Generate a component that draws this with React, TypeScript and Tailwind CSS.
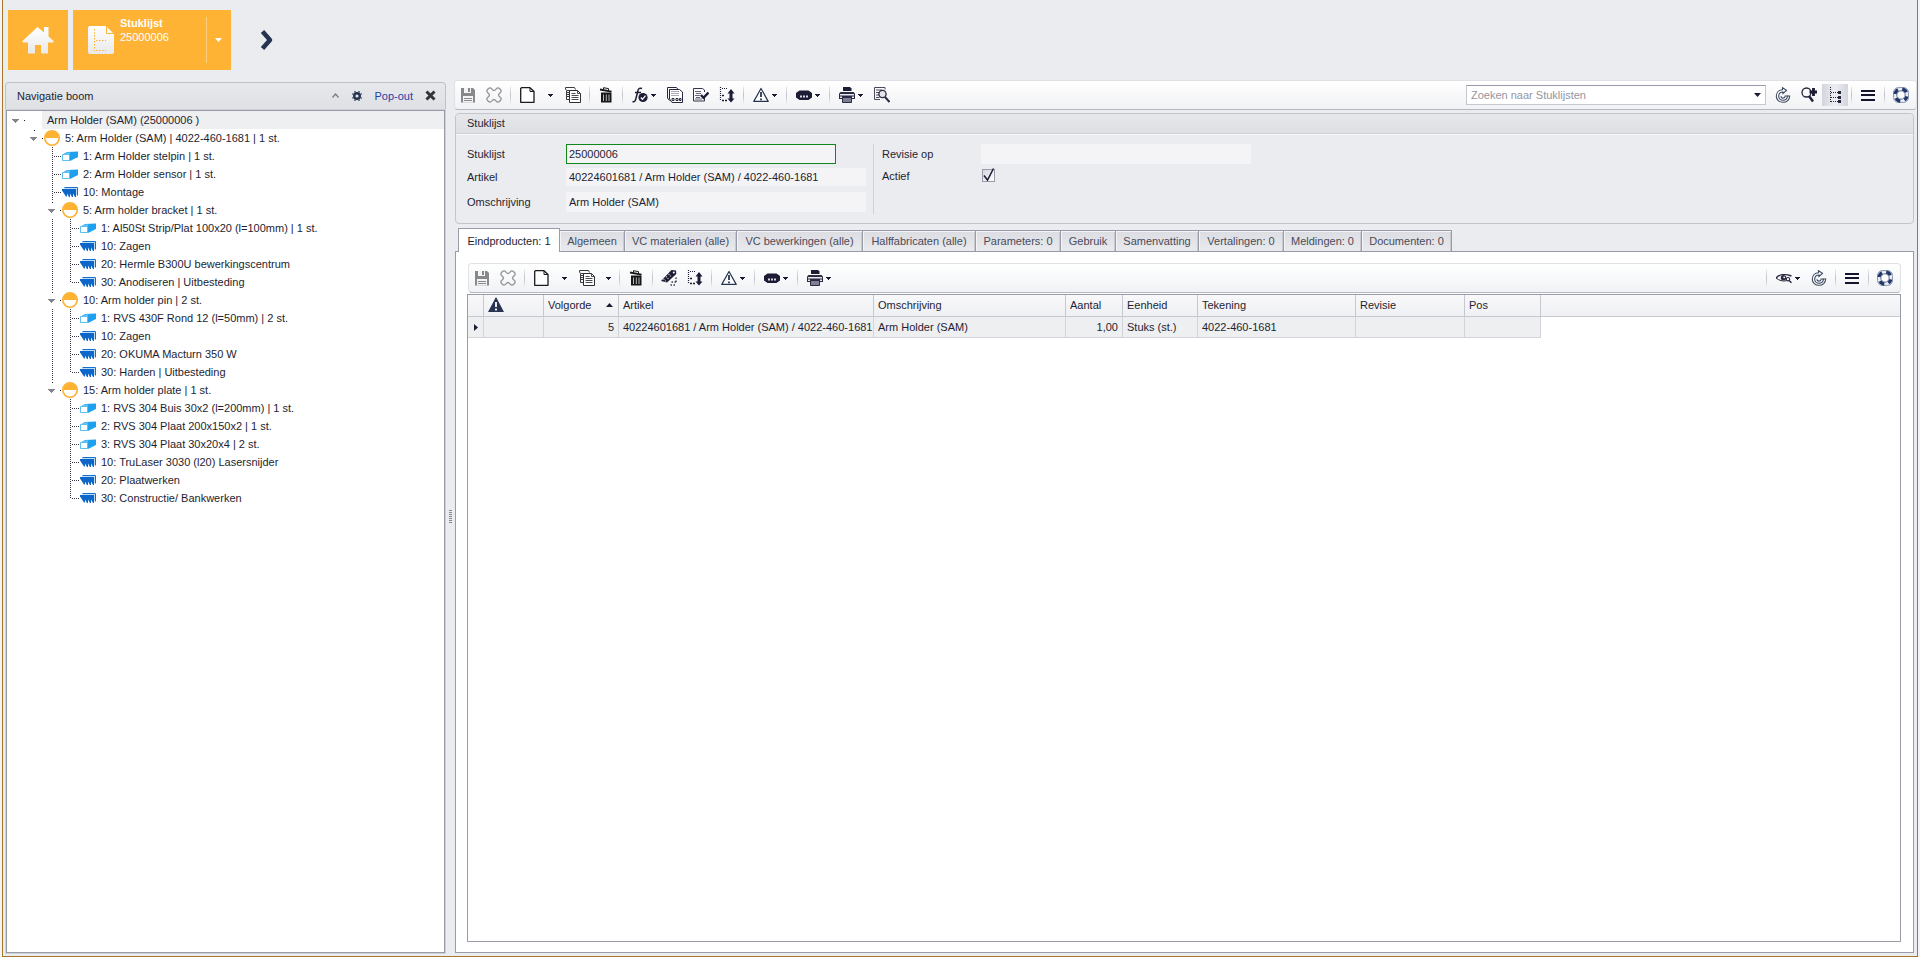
import type { ReactNode } from "react";

type Guide = "blank" | "line" | "tee" | "end" | "root" | "open";

type TreeRow = {
  guides: Guide[];
  icon: "none" | "assembly" | "material" | "operation";
  label: string;
  selected?: boolean;
};

const treeRows: TreeRow[] = [
  { guides: ["root"], icon: "none", label: "Arm Holder (SAM) (25000006 )", selected: true },
  { guides: ["blank", "open"], icon: "assembly", label: "5: Arm Holder (SAM) | 4022-460-1681 | 1 st." },
  { guides: ["blank", "blank", "tee"], icon: "material", label: "1: Arm Holder stelpin | 1 st." },
  { guides: ["blank", "blank", "tee"], icon: "material", label: "2: Arm Holder sensor | 1 st." },
  { guides: ["blank", "blank", "tee"], icon: "operation", label: "10: Montage" },
  { guides: ["blank", "blank", "open"], icon: "assembly", label: "5: Arm holder bracket | 1 st." },
  { guides: ["blank", "blank", "line", "tee"], icon: "material", label: "1: Al50St Strip/Plat 100x20 (l=100mm) | 1 st." },
  { guides: ["blank", "blank", "line", "tee"], icon: "operation", label: "10: Zagen" },
  { guides: ["blank", "blank", "line", "tee"], icon: "operation", label: "20: Hermle B300U bewerkingscentrum" },
  { guides: ["blank", "blank", "line", "end"], icon: "operation", label: "30: Anodiseren | Uitbesteding" },
  { guides: ["blank", "blank", "open"], icon: "assembly", label: "10: Arm holder pin | 2 st." },
  { guides: ["blank", "blank", "line", "tee"], icon: "material", label: "1: RVS 430F Rond 12 (l=50mm) | 2 st." },
  { guides: ["blank", "blank", "line", "tee"], icon: "operation", label: "10: Zagen" },
  { guides: ["blank", "blank", "line", "tee"], icon: "operation", label: "20: OKUMA Macturn 350 W" },
  { guides: ["blank", "blank", "line", "end"], icon: "operation", label: "30: Harden | Uitbesteding" },
  { guides: ["blank", "blank", "open"], icon: "assembly", label: "15: Arm holder plate | 1 st." },
  { guides: ["blank", "blank", "blank", "tee"], icon: "material", label: "1: RVS 304 Buis 30x2 (l=200mm) | 1 st." },
  { guides: ["blank", "blank", "blank", "tee"], icon: "material", label: "2: RVS 304 Plaat 200x150x2 | 1 st." },
  { guides: ["blank", "blank", "blank", "tee"], icon: "material", label: "3: RVS 304 Plaat 30x20x4 | 2 st." },
  { guides: ["blank", "blank", "blank", "tee"], icon: "operation", label: "10: TruLaser 3030 (l20) Lasersnijder" },
  { guides: ["blank", "blank", "blank", "tee"], icon: "operation", label: "20: Plaatwerken" },
  { guides: ["blank", "blank", "blank", "end"], icon: "operation", label: "30: Constructie/ Bankwerken" },
];

const tabs = [
  { label: "Algemeen", width: "w-[65px]" },
  { label: "VC materialen (alle)", width: "w-[112px]" },
  { label: "VC bewerkingen (alle)", width: "w-[126px]" },
  { label: "Halffabricaten (alle)", width: "w-[113px]" },
  { label: "Parameters: 0", width: "w-[85px]" },
  { label: "Gebruik", width: "w-[55px]" },
  { label: "Samenvatting", width: "w-[83px]" },
  { label: "Vertalingen: 0", width: "w-[85px]" },
  { label: "Meldingen: 0", width: "w-[78px]" },
  { label: "Documenten: 0", width: "w-[90px]" },
];

/* ---------- tree parts ---------- */

function GuideCell({ kind }: { kind: Guide }) {
  return (
    <svg width="18" height="18" viewBox="0 0 18 18" className="shrink-0" shapeRendering="crispEdges">
      {(kind === "line" || kind === "tee") && (
        <path d="M9.500 0V18" stroke="#3a3a4a" strokeDasharray="1 1" />
      )}
      {kind === "end" && <path d="M9.500 0V10" stroke="#3a3a4a" strokeDasharray="1 1" />}
      {(kind === "tee" || kind === "end") && (
        <path d="M11 9.500H18" stroke="#3a3a4a" strokeDasharray="1 1" />
      )}
      {(kind === "root" || kind === "open") && (
        <>
          <path d="M5 8h7v1h-1v1h-1v1H9v1H8v-1H7v-1H6V9H5z" fill="#84848f" />
          <rect x="17" y="9" width="1" height="1" fill="#1c1c30" />
        </>
      )}
      {kind === "open" && <rect x="9" y="1" width="1" height="1" fill="#1c1c30" />}
    </svg>
  );
}

function NodeIcon({ icon }: { icon: TreeRow["icon"] }) {
  if (icon === "none") return <span className="w-4 shrink-0" />;
  return (
    <svg width="16" height="16" viewBox="0 0 16 16" className="shrink-0">
      {icon === "assembly" && (
        <>
          <circle cx="8" cy="8" r="7.200" fill="#fff" stroke="#fdb232" strokeWidth="1.600" />
          <path d="M1 8a7 7 0 0 1 14 0z" fill="#fdb232" />
        </>
      )}
      {icon === "material" && (
        <>
          <path d="M0 7 5 4l11-.5v5.500L8 13z" fill="#1fa0ee" />
          <path d="M2 6.300 5.500 4.500 8.500 4.300 7 6.300z" fill="#6cc5f7" />
          <path d="M.5 6.500h7v6h-7z" fill="#fff" stroke="#5cbff4" />
        </>
      )}
      {icon === "operation" && (
        <>
          <path d="M2.500 3.500h13v8" fill="none" stroke="#1470cf" />
          <path d="M2 4.500h12.500V11" fill="none" stroke="#b9dcf8" />
          <path d="M0 5h14v8h-1l-2-3.500v3.500h-1l-2-3.500v3.500H7L5 9.500v3H4L0 6.500z" fill="#0d66c8" />
        </>
      )}
    </svg>
  );
}

/* ---------- toolbar parts ---------- */

function Icon({ children }: { children: ReactNode }) {
  return (
    <svg width="16" height="16" viewBox="0 0 16 16" fill="none" className="shrink-0">
      {children}
    </svg>
  );
}

function Caret() {
  return (
    <svg width="5" height="3" viewBox="0 0 5 3" className="shrink-0" shapeRendering="crispEdges">
      <path d="M0 0h5v1H4v1H3v1H2V2H1V1H0z" fill="#1c1c30" />
    </svg>
  );
}

function ToolButton({ label, active, children }: { label: string; active?: boolean; children: ReactNode }) {
  return (
    <button
      type="button"
      aria-label={label}
      className={
        active
          ? "flex h-[22px] w-[26px] items-center justify-center bg-linear-to-r from-[#d3d5dc] via-[#eceef2] to-[#d3d5dc]"
          : "flex h-[22px] w-[26px] items-center justify-center"
      }
    >
      {children}
    </button>
  );
}

function DropButton({ label, children }: { label: string; children: ReactNode }) {
  return (
    <button type="button" aria-label={label} className="flex h-[22px] w-9 items-center gap-[3px] pl-[6px]">
      {children}
      <Caret />
    </button>
  );
}

function CaretButton({ label, wide }: { label: string; wide?: boolean }) {
  return (
    <button
      type="button"
      aria-label={label}
      className={wide ? "flex h-[22px] w-5 items-center justify-center" : "flex h-[22px] w-4 items-center justify-center"}
    >
      <Caret />
    </button>
  );
}

function Separator() {
  return (
    <span className="flex w-[7px] shrink-0 justify-center">
      <span className="h-[18px] w-px bg-linear-to-b from-[#eeeff2] via-[#c0c2ca] to-[#eeeff2]" />
    </span>
  );
}

const SaveIcon = () => (
  <Icon>
    <path d="M1 1h12l2 2v12.500H1z" fill="#88888c" />
    <path d="M4 1h7v5H4zM3 9h10v6.500H3z" fill="#f4f4f6" />
    <path d="M8 1h2v4H8zM4 11h8v1H4zM4 13h8v1H4z" fill="#88888c" />
  </Icon>
);

const CancelIcon = () => (
  <Icon>
    <path
      d="M4.200 .8C5.500.8 6.500 3.500 8 3.500S10.500.8 11.800.8s3.400 2 3.400 3.400S12.500 6.500 12.500 8s2.700 2.500 2.700 3.800-2 3.400-3.400 3.400S9.500 12.500 8 12.500s-2.500 2.700-3.800 2.700S.8 13.200.8 11.800 3.500 9.500 3.500 8 .8 5.500.8 4.200 2.800.8 4.200.8z"
      stroke="#949498"
      strokeWidth="1.300"
      strokeLinejoin="round"
    />
  </Icon>
);

const NewIcon = () => (
  <Icon>
    <path d="M2.500 .7h8.500l4 3.800v10.800h-13.300V1.500z" fill="#fff" stroke="#1a1a1e" strokeWidth="1.300" strokeLinejoin="round" />
    <path d="M11 1v3.500h4" stroke="#1a1a1e" />
  </Icon>
);

const CopyIcon = () => (
  <Icon>
    <path d="M4 12.500H1.500v-9L.5 2V.5h9l1 2" stroke="#3c3c40" />
    <path d="M2 3.500h3M2 5.500h2M2 7.500h2M2 9.500h2" stroke="#3c3c40" />
    <path d="M4.500 3.500h8l3 3v9h-11z" fill="#fff" stroke="#2c2c30" strokeLinejoin="round" />
    <path d="M12.500 3.500v3h3M6.500 6.500h4M6.500 8.500h7M6.500 10.500h7M6.500 12.500h7" stroke="#4a4a50" />
  </Icon>
);

const TrashIcon = () => (
  <Icon>
    <path d="M3 5.500h10.500v10H3z" fill="#17171a" />
    <path d="M5.500 7.500v6.500M8.300 7.500v6.500M11 7.500v6.500" stroke="#b5b5ba" />
    <path d="M2 2.500 13.500 4.600" stroke="#17171a" strokeWidth="1.800" />
    <path d="M5.500 2.500V.7l5 .9v1.800" stroke="#17171a" />
  </Icon>
);

const FormulaIcon = () => (
  <Icon>
    <path d="M.5 14.500c2 .8 2.800-.6 3.300-2.500L6 3.500C6.500 1.500 8 .6 10 1.500M3 5.500h6" stroke="#1c1c34" strokeWidth="1.500" />
    <circle cx="11" cy="10.500" r="4.600" fill="#1c1c34" />
    <path d="m8.800 10.500 1.700 1.800 3-3.600" stroke="#fff" strokeWidth="1.300" />
  </Icon>
);

const CalcPagesIcon = () => (
  <Icon>
    <path d="M2.500 13.500 .5 11V.5h9l1.500 2" stroke="#26263c" />
    <path d="M2.500 12V2.500h10l3 2.500v10.500H5z" fill="#fff" stroke="#26263c" />
    <path d="M4.500 4.500h8M4.500 6.500h8M4.500 8.500h8" stroke="#55556a" strokeDasharray="1 1" />
    <path d="M5 11.500h2v2H5zM9 11.500h2v2H9zM12.500 11.500h1.500v2h-1.500z" stroke="#26263c" />
  </Icon>
);

const CheckListIcon = () => (
  <Icon>
    <path d="M11.500 5V3l-2-1.500h-9v12.500h11V11" stroke="#35354a" />
    <path d="M2 4.500h6M3 6.500h5M2 8.500h5M3 10.500h4M2 12h7" stroke="#6a6a7c" />
    <path d="m8 8 2.500 2.800L15.500 5.500" stroke="#1c1c34" strokeWidth="2.400" />
  </Icon>
);

const ResizeIcon = () => (
  <Icon>
    <path d="M1.500 0v14" stroke="#1c1c34" strokeWidth="1.200" strokeDasharray="1 1" />
    <path d="M3 1.500h6" stroke="#1c1c34" strokeWidth="1.200" strokeDasharray="1 1" />
    <path d="M3 8.500h3M3 13.500h6" stroke="#1c1c34" strokeWidth="1.600" strokeDasharray="2 1" />
    <path d="M12 2 15.500 6.500h-2v5h2L12 15.500 8.500 11.500h2v-5h-2z" fill="#1c1c34" />
  </Icon>
);

const WarnIcon = () => (
  <Icon>
    <path d="M8 1.500 15.200 14.400H.8z" fill="#fff" stroke="#27344f" strokeWidth="1.200" strokeLinejoin="round" />
    <path d="M8 5v5M8 11.500v1.700" stroke="#27344f" strokeWidth="1.800" />
  </Icon>
);

const MoreIcon = () => (
  <Icon>
    <path d="M3.500 3.500h9L16 6v4.500l-3.500 2.500h-9L0 10.500V6z" fill="#1c1c34" />
    <path d="M4 8.500h2v2H4zM7 8.500h2v2H7zM10 8.500h2v2h-2z" fill="#d8d8e2" />
  </Icon>
);

const PrintIcon = () => (
  <Icon>
    <path d="M4 0h7l1.500 1.500V4H4z" fill="#1c1c34" />
    <path d="M1.500 5h13L16 6.500V12H0V6.500z" fill="#2a2a42" />
    <path d="M1 7h14v1.500H1zM1 9.500h2V11H1zM13 9.500h2V11h-2z" fill="#e6e8ee" />
    <path d="M3.500 10.500h9v5h-9z" fill="#7c8092" stroke="#2a2a42" />
  </Icon>
);

const PreviewIcon = () => (
  <Icon>
    <path d="M11 2.500V.5H.5v12H6" stroke="#4a4a5c" />
    <path d="M2 3h6M2 5.500h3.500M2 8h3M2 10.500h3.500" stroke="#4a4a5c" />
    <circle cx="8.500" cy="7" r="3.600" fill="#e4e6ec" stroke="#2a2a40" strokeWidth="1.300" />
    <path d="M11 10 15.500 15" stroke="#2a2a40" strokeWidth="2" />
  </Icon>
);

const RefreshIcon = () => (
  <Icon>
    <path
      d="M7.500.7 11.500 3.400 8 6.500V5C5.300 5 3.700 6.900 3.700 9.200c0 2.400 1.900 4.100 4.300 4.100s4.300-1.700 4.500-4.300h2.200c-.1 3.700-3 6.300-6.700 6.300S1.300 12.700 1.300 9.200c0-3.700 2.700-6.300 6.200-6.500z"
      fill="#fff"
      stroke="#3a465e"
      strokeWidth="1.100"
    />
    <path d="M6 9.200c0 1.200.9 1.900 2 1.900s2-.8 2.200-2.100h2.300" stroke="#3a465e" strokeWidth="1.100" />
  </Icon>
);

const ZoomPlusIcon = () => (
  <Icon>
    <circle cx="5.500" cy="5.500" r="4.500" stroke="#24243a" strokeWidth="1.300" />
    <path d="M8 9 12 14.500" stroke="#24243a" strokeWidth="2.500" />
    <path d="M12.500 1v8M8.500 5H16" stroke="#1c1c34" strokeWidth="2.800" />
  </Icon>
);

const TreeIcon = () => (
  <Icon>
    <path d="M3.500 0v16" stroke="#24243a" strokeDasharray="1 1" />
    <path d="M4 5.500h7M4 10.500h7M4 14.500h7" stroke="#24243a" strokeDasharray="1 1" />
    <path d="M11 4h3v3h-3zM11 9h3v3h-3zM11 13h3v3h-3z" fill="#24243a" />
  </Icon>
);

const MenuIcon = () => (
  <Icon>
    <path d="M1 3h14v2H1zM1 7h14v2H1zM1 12h14v2H1z" fill="#14142a" />
  </Icon>
);

const HelpIcon = () => (
  <Icon>
    <rect x=".6" y=".6" width="14.800" height="14.800" rx="4.800" fill="#eef0f5" stroke="#7a86a2" strokeWidth="0.900" />
    <circle
      cx="8"
      cy="8"
      r="6"
      stroke="#22376c"
      strokeWidth="3.400"
      strokeDasharray="5.400 4.025"
      strokeDashoffset="2.700"
      transform="rotate(30 8 8)"
    />
    <circle cx="8" cy="8" r="4.200" fill="#fff" stroke="#4a5a84" strokeWidth="0.900" />
  </Icon>
);

const TagIcon = () => (
  <Icon>
    <path d="M10.500 0 15 .5l.3 3.500L6 12.500 0 11z" fill="#1c1c34" />
    <path d="M2.500 9 5 11.500M5 6.500 8 9.500M7.500 4 10.500 7" stroke="#c9c9d4" strokeWidth="1.200" strokeDasharray="1.200 1" />
    <circle cx="12.800" cy="2.500" r="1" fill="#fff" />
    <path d="M9.500 15h6M10.500 12h5M15 7.500v6" stroke="#3a3a50" strokeWidth="1.500" strokeDasharray="1.500 1.500" />
  </Icon>
);

const EyeIcon = () => (
  <Icon>
    <path d="M0 8C3 4.500 9 3.500 15.500 6" stroke="#2a2a42" strokeWidth="1.400" />
    <path d="M0 8c3 2.500 7 3.500 10 2.800" stroke="#2a2a42" />
    <circle cx="7.500" cy="7.800" r="2.700" fill="#2a2a42" />
    <circle cx="8.200" cy="7.300" r="0.900" fill="#fff" />
    <circle cx="12" cy="9.200" r="1.700" fill="#fff" stroke="#2a2a42" strokeWidth="1.200" />
    <path d="m13.300 10.700 2.200 2" stroke="#2a2a42" strokeWidth="1.500" />
  </Icon>
);

/* ---------- page sections ---------- */

function TopTiles() {
  return (
    <header className="flex h-20 shrink-0 items-start pt-[10px] pl-[5px]">
      <button type="button" aria-label="Home" className="flex size-[60px] items-center justify-center bg-[#feb335]">
        <svg width="32" height="28" viewBox="0 0 32 28">
          <defs>
            <linearGradient id="paper" x1="0" y1="0" x2="0" y2="1">
              <stop offset="0" stopColor="#ffffff" />
              <stop offset="1" stopColor="#e9e9ea" />
            </linearGradient>
          </defs>
          <path
            d="M15.500 1 22 6.500V1h4.500v9.500L31.500 15v1.500H26v11h-7V19h-6v8.500H6v-11H.5V15z"
            fill="url(#paper)"
          />
        </svg>
      </button>
      <div className="ml-[5px] flex h-[60px] w-[158px] bg-[#feb335] text-white">
        <svg width="26" height="28" viewBox="0 0 26 28" className="mt-4 ml-[15px] shrink-0">
          <path d="M2 0h16l8 8v18a2 2 0 0 1-2 2H2a2 2 0 0 1-2-2V2a2 2 0 0 1 2-2z" fill="url(#paper)" />
          <path d="M18.500 0v7.500H26" stroke="#feb335" fill="none" />
          <path d="M6.500 3v22M8 14.500h10M8 24.500h10" stroke="#feb335" strokeDasharray="1.500 1.500" fill="none" />
        </svg>
        <div className="ml-[6px] flex-1 pt-[7px]">
          <div className="text-[11px] leading-[13px] font-bold">Stuklijst</div>
          <div className="text-[11px] leading-[14px]">25000006</div>
        </div>
        <button
          type="button"
          aria-label="Stuklijst menu"
          className="my-[7px] flex w-[25px] items-center justify-center border-l border-[#ffcf80] pr-[2px]"
        >
          <svg width="7" height="4" viewBox="0 0 7 4">
            <path d="M0 0h7L3.500 4z" fill="#fff" />
          </svg>
        </button>
      </div>
      <button type="button" aria-label="Volgende" className="mt-[19px] ml-[29px]">
        <svg width="14" height="22" viewBox="0 0 14 22">
          <path d="m2.500 2.500 7.500 8.500-7.500 8.500" fill="none" stroke="#26324f" strokeWidth="4.500" strokeLinejoin="round" />
        </svg>
      </button>
    </header>
  );
}

function NavigationPanel() {
  return (
    <aside className="mt-[2px] flex w-[441px] shrink-0 flex-col">
      <div className="flex h-7 shrink-0 items-center rounded-t border border-b-0 border-[#bfc1c8] bg-linear-to-b from-[#e7e8eb] to-[#dfe0e4] pr-[9px] pb-[2px] pl-[11px]">
        <h2 className="flex-1">Navigatie boom</h2>
        <button type="button" aria-label="Inklappen">
          <svg width="7" height="5" viewBox="0 0 7 5">
            <path d="m.5 4.500 3-3.500 3 3.500" fill="none" stroke="#7a7a86" strokeWidth="1.300" />
          </svg>
        </button>
        <button type="button" aria-label="Instellingen" className="ml-[13px]">
          <svg width="10" height="10" viewBox="0 0 10 10">
            <circle cx="5" cy="5" r="2.800" fill="none" stroke="#27344f" strokeWidth="2.400" />
            <path d="M3 0v10M7 0v10M0 3h10M0 7h10" stroke="#27344f" strokeWidth="1.200" strokeDasharray="1.500 7" />
          </svg>
        </button>
        <button type="button" className="ml-3 text-[#1f3fa8]">
          Pop-out
        </button>
        <button type="button" aria-label="Sluiten" className="ml-3">
          <svg width="11" height="11" viewBox="0 0 11 11">
            <path d="m1.500 1.500 8 8m0-8-8 8" stroke="#333338" strokeWidth="3" />
          </svg>
        </button>
      </div>
      <ul className="mx-px flex-1 border border-[#9a9ba8] bg-white shadow-[0_0_0_1px_#cfd1d8]">
        {treeRows.map((row, index) => (
          <li key={index} className="flex h-[18px] items-center">
            {row.guides.map((kind, column) => (
              <GuideCell key={column} kind={kind} />
            ))}
            <span className="w-px shrink-0" />
            <NodeIcon icon={row.icon} />
            <span
              className={
                row.selected
                  ? "h-full flex-1 bg-[#eeeff1] pl-[5px] leading-[18px] whitespace-nowrap"
                  : "h-full flex-1 pl-[5px] leading-[18px] whitespace-nowrap"
              }
            >
              {row.label}
            </span>
          </li>
        ))}
      </ul>
    </aside>
  );
}

function MainToolbar() {
  return (
    <div className="flex h-[30px] shrink-0 items-center rounded border border-[#dfe1e5] border-b-[#b4b7c0] bg-linear-to-b from-white to-[#f1f2f5] pr-[2px]">
      <ToolButton label="Opslaan"><SaveIcon /></ToolButton>
      <ToolButton label="Annuleren"><CancelIcon /></ToolButton>
      <Separator />
      <ToolButton label="Nieuw"><NewIcon /></ToolButton>
      <CaretButton label="Nieuw opties" wide />
      <ToolButton label="Kopiëren"><CopyIcon /></ToolButton>
      <Separator />
      <ToolButton label="Verwijderen"><TrashIcon /></ToolButton>
      <Separator />
      <DropButton label="Formules"><FormulaIcon /></DropButton>
      <ToolButton label="Calculatie"><CalcPagesIcon /></ToolButton>
      <ToolButton label="Controleren"><CheckListIcon /></ToolButton>
      <ToolButton label="Hernummeren"><ResizeIcon /></ToolButton>
      <Separator />
      <DropButton label="Meldingen"><WarnIcon /></DropButton>
      <Separator />
      <DropButton label="Meer"><MoreIcon /></DropButton>
      <Separator />
      <DropButton label="Afdrukken"><PrintIcon /></DropButton>
      <ToolButton label="Voorbeeld"><PreviewIcon /></ToolButton>
      <div className="mr-1 ml-auto flex h-5 w-[300px] items-center border border-[#c6c7d0] border-t-[#9a9ba8] bg-white pr-1">
        <input
          type="text"
          aria-label="Zoeken"
          placeholder="Zoeken naar Stuklijsten"
          className="h-full min-w-0 flex-1 pl-1 outline-none placeholder:text-[#9495a0]"
        />
        <button type="button" aria-label="Zoekopties">
          <svg width="7" height="4" viewBox="0 0 7 4">
            <path d="M0 0h7L3.500 4z" fill="#1c1c30" />
          </svg>
        </button>
      </div>
      <ToolButton label="Vernieuwen"><RefreshIcon /></ToolButton>
      <ToolButton label="Uitgebreid zoeken"><ZoomPlusIcon /></ToolButton>
      <ToolButton label="Navigatie boom" active><TreeIcon /></ToolButton>
      <Separator />
      <ToolButton label="Menu"><MenuIcon /></ToolButton>
      <Separator />
      <ToolButton label="Help"><HelpIcon /></ToolButton>
    </div>
  );
}

function DetailsGroup() {
  return (
    <section className="mt-[3px] mr-[3px] ml-px h-[111px] shrink-0 rounded border border-[#c3c5cc]">
      <h2 className="h-5 rounded-t border-b border-[#cfd1d6] bg-linear-to-b from-[#e6e7ea] to-[#dfe0e4] pl-[11px] leading-[18px]">
        Stuklijst
      </h2>
      <div className="flex border-t border-[#f8f8fa] pt-[9px] pl-[11px]">
        <div className="grid w-[406px] grid-cols-[99px_1fr] content-start items-center gap-y-1">
          <label htmlFor="stuklijst">Stuklijst</label>
          <input id="stuklijst" defaultValue="25000006" className="h-5 w-[270px] border border-[#11861a] bg-[#f4f4f6] px-[2px] outline-none" />
          <label htmlFor="artikel">Artikel</label>
          <input id="artikel" defaultValue="40224601681 / Arm Holder (SAM) / 4022-460-1681" className="h-[18px] w-[300px] bg-[#f4f4f6] px-[3px] outline-none" />
          <label htmlFor="omschrijving" className="mt-[2px]">Omschrijving</label>
          <input id="omschrijving" defaultValue="Arm Holder (SAM)" className="mt-[2px] h-5 w-[300px] bg-[#f4f4f6] px-[3px] outline-none" />
        </div>
        <div className="h-[70px] w-[9px] border-l border-[#cfd1d7]" />
        <div className="grid grid-cols-[99px_1fr] content-start items-center gap-y-1">
          <label htmlFor="revisie">Revisie op</label>
          <input id="revisie" className="h-5 w-[270px] bg-[#f4f4f6] px-[3px] outline-none" />
          <label htmlFor="actief">Actief</label>
          <span className="relative ml-px flex size-4">
            <input
              id="actief"
              type="checkbox"
              defaultChecked
              className="peer mt-px size-[13px] appearance-none border border-[#9a9ba8] bg-linear-to-br from-[#d4d6dc] to-white"
            />
            <svg
              width="14"
              height="15"
              viewBox="0 0 14 15"
              className="pointer-events-none invisible absolute top-0 left-0 peer-checked:visible"
            >
              <path d="m2 7.500 3.500 4.500L11.500.5" fill="none" stroke="#1c1c34" strokeWidth="1.500" />
            </svg>
          </span>
        </div>
      </div>
    </section>
  );
}

function TabStrip() {
  return (
    <div role="tablist" className="relative z-10 mt-1 -mb-px ml-1 flex h-6 shrink-0 items-end">
      <button
        type="button"
        role="tab"
        aria-selected="true"
        className="h-6 w-[102px] border border-b-0 border-[#9a9ba8] bg-white"
      >
        Eindproducten: 1
      </button>
      {tabs.map((tab) => (
        <button
          key={tab.label}
          type="button"
          role="tab"
          aria-selected="false"
          className={`${tab.width} h-[22px] border border-l-0 border-[#9a9ba8] bg-linear-to-b from-[#dcdde2] to-[#e9eaed] whitespace-nowrap text-[#4a4b5a] shadow-[inset_1px_1px_0_#f4f4f6,inset_-1px_0_0_#c9cad1]`}
        >
          {tab.label}
        </button>
      ))}
    </div>
  );
}

function GridToolbar() {
  return (
    <div className="ml-px flex h-[30px] shrink-0 items-center rounded border border-[#e0e2e6] border-b-[#b4b7c0] bg-linear-to-b from-white to-[#f1f2f5] pr-[2px]">
      <ToolButton label="Regel opslaan"><SaveIcon /></ToolButton>
      <ToolButton label="Regel annuleren"><CancelIcon /></ToolButton>
      <Separator />
      <ToolButton label="Nieuwe regel"><NewIcon /></ToolButton>
      <CaretButton label="Nieuwe regel opties" wide />
      <ToolButton label="Regel kopiëren"><CopyIcon /></ToolButton>
      <CaretButton label="Kopieeropties" />
      <Separator />
      <ToolButton label="Regel verwijderen"><TrashIcon /></ToolButton>
      <Separator />
      <ToolButton label="Artikel"><TagIcon /></ToolButton>
      <ToolButton label="Regels hernummeren"><ResizeIcon /></ToolButton>
      <Separator />
      <DropButton label="Regelmeldingen"><WarnIcon /></DropButton>
      <Separator />
      <DropButton label="Meer regelopties"><MoreIcon /></DropButton>
      <Separator />
      <DropButton label="Regels afdrukken"><PrintIcon /></DropButton>
      <div className="ml-auto flex items-center">
        <Separator />
        <DropButton label="Weergave"><EyeIcon /></DropButton>
        <ToolButton label="Regels vernieuwen"><RefreshIcon /></ToolButton>
        <Separator />
        <ToolButton label="Rastermenu"><MenuIcon /></ToolButton>
        <Separator />
        <ToolButton label="Rasterhelp"><HelpIcon /></ToolButton>
      </div>
    </div>
  );
}

const headCell = "h-[22px] border-r border-b border-[#c6c7cf] px-1 pb-[2px] text-left font-normal whitespace-nowrap";
const bodyCell = "h-[21px] border-r border-b border-[#d3d4da] bg-[#eeeff1] px-1 whitespace-nowrap";

function ProductGrid() {
  return (
    <div className="mt-px flex-1 border border-[#9a9ba8]">
      <table className="w-full table-fixed border-separate border-spacing-0">
        <colgroup>
          <col className="w-4" />
          <col className="w-[60px]" />
          <col className="w-[75px]" />
          <col className="w-[255px]" />
          <col className="w-[192px]" />
          <col className="w-[57px]" />
          <col className="w-[75px]" />
          <col className="w-[158px]" />
          <col className="w-[109px]" />
          <col className="w-[76px]" />
          <col />
        </colgroup>
        <thead className="bg-linear-to-b from-[#f8f8fa] to-[#eff0f3]">
          <tr>
            <th className={headCell} />
            <th className={headCell}>
              <svg width="16" height="15" viewBox="0 0 16 15" aria-label="Meldingen">
                <path d="M8 0 16 15H0z" fill="#26324f" />
                <path d="M8 5v5M8 11.500v2" stroke="#fff" strokeWidth="1.800" />
              </svg>
            </th>
            <th className={headCell}>
              <span className="flex items-center justify-between pr-px">
                Volgorde
                <svg width="7" height="4" viewBox="0 0 7 4">
                  <path d="M0 4h7L3.500 0z" fill="#1c1c30" />
                </svg>
              </span>
            </th>
            <th className={headCell}>Artikel</th>
            <th className={headCell}>Omschrijving</th>
            <th className={headCell}>Aantal</th>
            <th className={headCell}>Eenheid</th>
            <th className={headCell}>Tekening</th>
            <th className={headCell}>Revisie</th>
            <th className={headCell}>Pos</th>
            <th className="border-b border-[#c6c7cf]" />
          </tr>
        </thead>
        <tbody>
          <tr>
            <td className={bodyCell}>
              <svg width="4" height="7" viewBox="0 0 4 7" className="ml-[2px]">
                <path d="M0 0v7l4-3.500z" fill="#1c1c30" />
              </svg>
            </td>
            <td className={bodyCell} />
            <td className={`${bodyCell} text-right`}>5</td>
            <td className={bodyCell}>40224601681 / Arm Holder (SAM) / 4022-460-1681</td>
            <td className={bodyCell}>Arm Holder (SAM)</td>
            <td className={`${bodyCell} text-right`}>1,00</td>
            <td className={bodyCell}>Stuks (st.)</td>
            <td className={bodyCell}>4022-460-1681</td>
            <td className={bodyCell} />
            <td className={bodyCell} />
            <td />
          </tr>
        </tbody>
      </table>
    </div>
  );
}

export default function App() {
  return (
    <div className="flex min-h-screen bg-[#f4f4f6] px-[2px] font-['Liberation_Sans',Arial,sans-serif] text-[11px] leading-[14px] text-[#1e1e32]">
      <div className="flex min-w-0 flex-1 flex-col border border-t-0 border-[#a4772a] bg-[#ebecef]">
        <TopTiles />
        <div className="flex flex-1 pb-[3px] pl-[2px]">
          <NavigationPanel />
          <div className="flex w-2 shrink-0 flex-col items-center justify-center gap-px">
            {[0, 1, 2, 3, 4, 5, 6].map((n) => (
              <span key={n} className="h-px w-[3px] bg-[#85868f]" />
            ))}
          </div>
          <main className="flex min-w-0 flex-1 flex-col">
            <MainToolbar />
            <DetailsGroup />
            <TabStrip />
            <section className="mr-[3px] ml-px flex flex-1 flex-col border border-[#9a9ba8] bg-white pt-[11px] pr-3 pb-[10px] pl-[11px]">
              <GridToolbar />
              <ProductGrid />
            </section>
          </main>
        </div>
      </div>
    </div>
  );
}
